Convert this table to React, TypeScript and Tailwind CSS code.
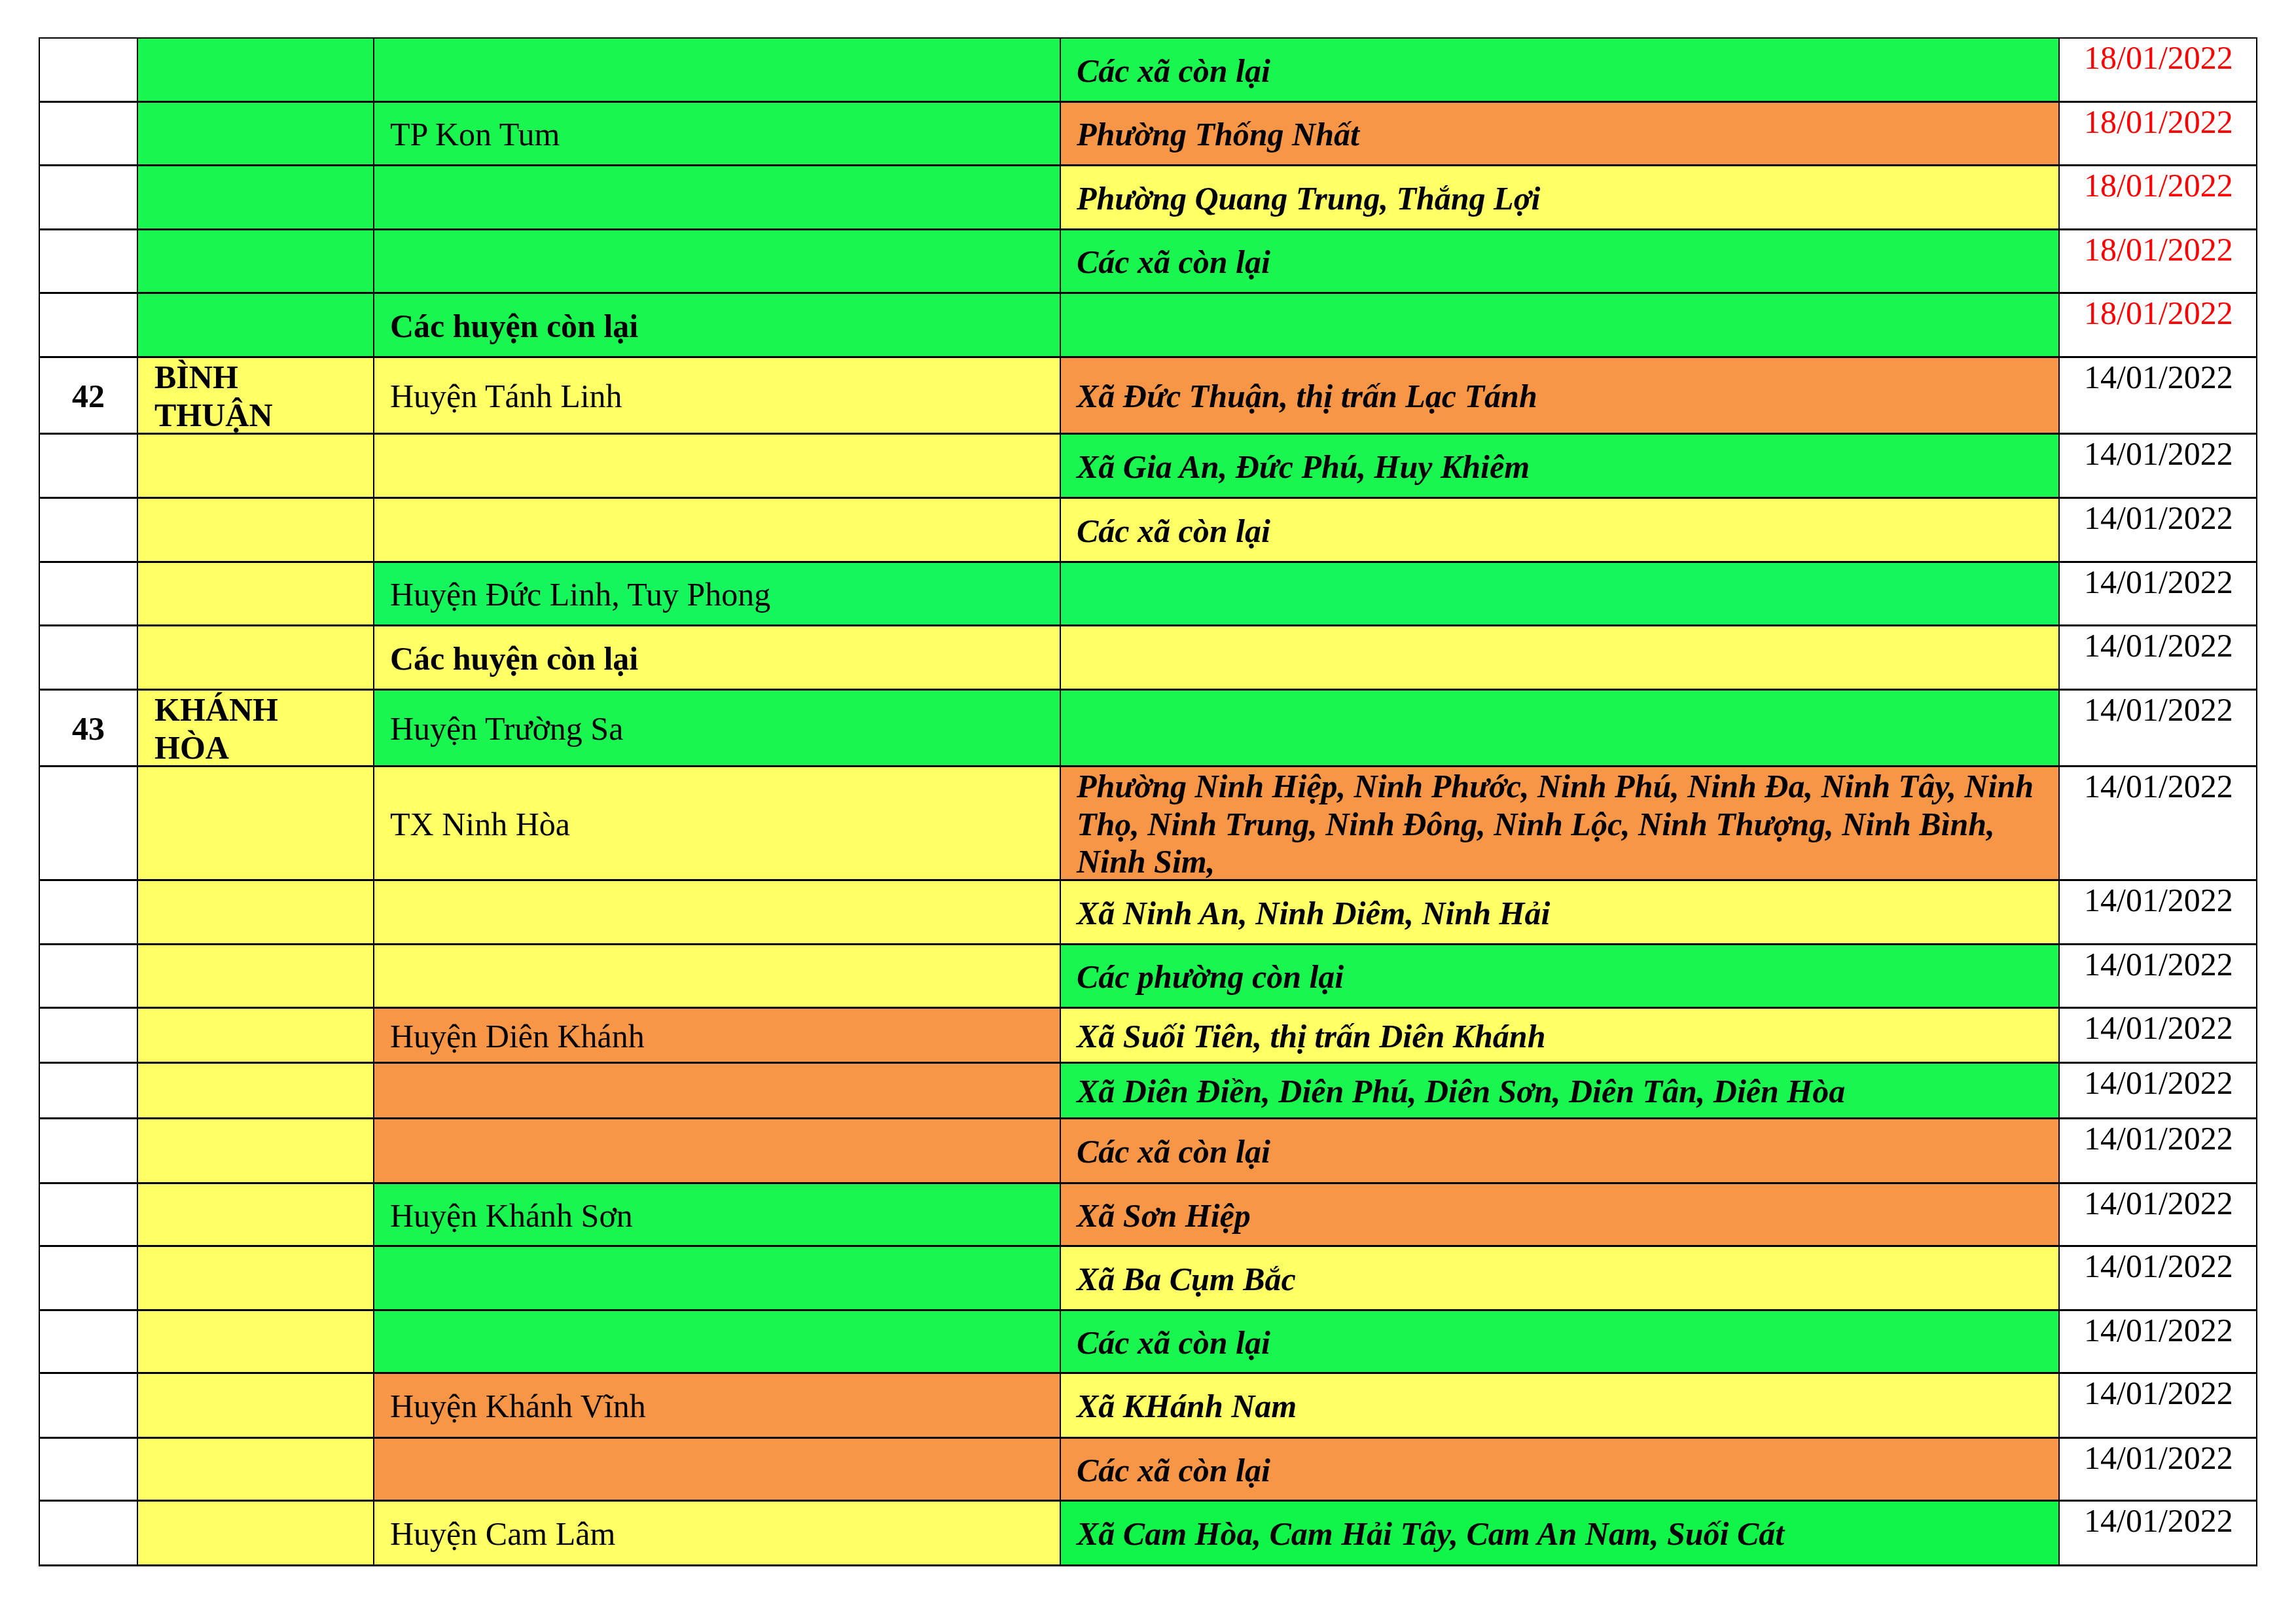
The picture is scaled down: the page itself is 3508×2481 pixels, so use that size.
type Bg = "g" | "g2" | "g3" | "o" | "y" | "w"

interface Row {
  h: string
  no?: string
  prov?: string
  provBg: Bg
  dist?: string
  distBold?: boolean
  distBg: Bg
  ward?: string
  wardBg: Bg
  date: string
  red?: boolean
}

const BG: Record<Bg, string> = {
  g: "bg-[#19f64f]",
  g2: "bg-[#14f65c]",
  g3: "bg-[#10f548]",
  o: "bg-[#f79646]",
  y: "bg-[#ffff66]",
  w: "bg-white"
}

const rows: Row[] = [
  { h: "h-[98px]", provBg: "g", distBg: "g", ward: "Các xã còn lại", wardBg: "g", date: "18/01/2022", red: true },
  { h: "h-[97px]", provBg: "g", dist: "TP Kon Tum", distBg: "g", ward: "Phường Thống Nhất", wardBg: "o", date: "18/01/2022", red: true },
  { h: "h-[98px]", provBg: "g", distBg: "g", ward: "Phường Quang Trung, Thắng Lợi", wardBg: "y", date: "18/01/2022", red: true },
  { h: "h-[97px]", provBg: "g", distBg: "g", ward: "Các xã còn lại", wardBg: "g", date: "18/01/2022", red: true },
  { h: "h-[98px]", provBg: "g", dist: "Các huyện còn lại", distBold: true, distBg: "g", wardBg: "g", date: "18/01/2022", red: true },
  { h: "h-[117px]", no: "42", prov: "BÌNH THUẬN", provBg: "y", dist: "Huyện Tánh Linh", distBg: "y", ward: "Xã Đức Thuận, thị trấn Lạc Tánh", wardBg: "o", date: "14/01/2022" },
  { h: "h-[98px]", provBg: "y", distBg: "y", ward: "Xã Gia An, Đức Phú, Huy Khiêm", wardBg: "g", date: "14/01/2022" },
  { h: "h-[98px]", provBg: "y", distBg: "y", ward: "Các xã còn lại", wardBg: "y", date: "14/01/2022" },
  { h: "h-[97px]", provBg: "y", dist: "Huyện Đức Linh, Tuy Phong", distBg: "g2", wardBg: "g2", date: "14/01/2022" },
  { h: "h-[98px]", provBg: "y", dist: "Các huyện còn lại", distBold: true, distBg: "y", wardBg: "y", date: "14/01/2022" },
  { h: "h-[117px]", no: "43", prov: "KHÁNH HÒA", provBg: "y", dist: "Huyện Trường Sa", distBg: "g", wardBg: "g", date: "14/01/2022" },
  {
    h: "h-[174px]",
    provBg: "y",
    dist: "TX Ninh Hòa",
    distBg: "y",
    ward: "Phường Ninh Hiệp, Ninh Phước, Ninh Phú, Ninh Đa, Ninh Tây, Ninh Thọ, Ninh Trung, Ninh Đông, Ninh Lộc, Ninh Thượng, Ninh Bình, Ninh Sim,",
    wardBg: "o",
    date: "14/01/2022"
  },
  { h: "h-[98px]", provBg: "y", distBg: "y", ward: "Xã Ninh An, Ninh Diêm, Ninh Hải", wardBg: "y", date: "14/01/2022" },
  { h: "h-[97px]", provBg: "y", distBg: "y", ward: "Các phường còn lại", wardBg: "g", date: "14/01/2022" },
  { h: "h-[84px]", provBg: "y", dist: "Huyện Diên Khánh", distBg: "o", ward: "Xã Suối Tiên, thị trấn Diên Khánh", wardBg: "y", date: "14/01/2022" },
  { h: "h-[85px]", provBg: "y", distBg: "o", ward: "Xã Diên Điền, Diên Phú, Diên Sơn, Diên Tân, Diên Hòa", wardBg: "g", date: "14/01/2022" },
  { h: "h-[99px]", provBg: "y", distBg: "o", ward: "Các xã còn lại", wardBg: "o", date: "14/01/2022" },
  { h: "h-[96px]", provBg: "y", dist: "Huyện Khánh Sơn", distBg: "g", ward: "Xã Sơn Hiệp", wardBg: "o", date: "14/01/2022" },
  { h: "h-[98px]", provBg: "y", distBg: "g", ward: "Xã Ba Cụm Bắc", wardBg: "y", date: "14/01/2022" },
  { h: "h-[96px]", provBg: "y", distBg: "g", ward: "Các xã còn lại", wardBg: "g", date: "14/01/2022" },
  { h: "h-[99px]", provBg: "y", dist: "Huyện Khánh Vĩnh", distBg: "o", ward: "Xã KHánh Nam", wardBg: "y", date: "14/01/2022" },
  { h: "h-[96px]", provBg: "y", distBg: "o", ward: "Các xã còn lại", wardBg: "o", date: "14/01/2022" },
  { h: "h-[99px]", provBg: "y", dist: "Huyện Cam Lâm", distBg: "y", ward: "Xã Cam Hòa, Cam Hải Tây, Cam An Nam, Suối Cát", wardBg: "g3", date: "14/01/2022" }
]

const TableRow = ({ row }: { row: Row }) => (
  <div
    className={`grid grid-cols-[150px_361px_1049px_1526px_302px] grid-rows-[100%] border-b-[3px] border-black ${row.h}`}
  >
    <div className="flex items-center justify-center border-r-2 border-black bg-white pt-1 font-bold">
      {row.no}
    </div>
    <div className={`border-r-2 border-black pl-[25px] pt-px font-bold ${BG[row.provBg]}`}>
      {row.prov && <div className="w-[150px]">{row.prov}</div>}
    </div>
    <div
      className={`flex items-center border-r-2 border-black pl-[24px] pt-1 ${BG[row.distBg]} ${row.distBold ? "font-bold" : ""}`}
    >
      {row.dist}
    </div>
    <div
      className={`flex items-center border-r-2 border-black pl-[24px] pr-[30px] pt-1 font-bold italic ${BG[row.wardBg]}`}
    >
      {row.ward}
    </div>
    <div
      className={`border-r-2 border-black bg-white pl-[37px] pt-px ${row.red ? "text-[#ff0000]" : "text-black"}`}
    >
      {row.date}
    </div>
  </div>
)

export default function App() {
  return (
    <div className="h-[2481px] w-[3508px] bg-white pl-[59px] pt-[57px] font-['Liberation_Serif','Times_New_Roman',serif] text-[50px] leading-[1.15] text-black">
      <div className="w-[3390px] border-l-2 border-t-2 border-black">
        {rows.map((row, i) => (
          <TableRow key={i} row={row} />
        ))}
      </div>
    </div>
  )
}
